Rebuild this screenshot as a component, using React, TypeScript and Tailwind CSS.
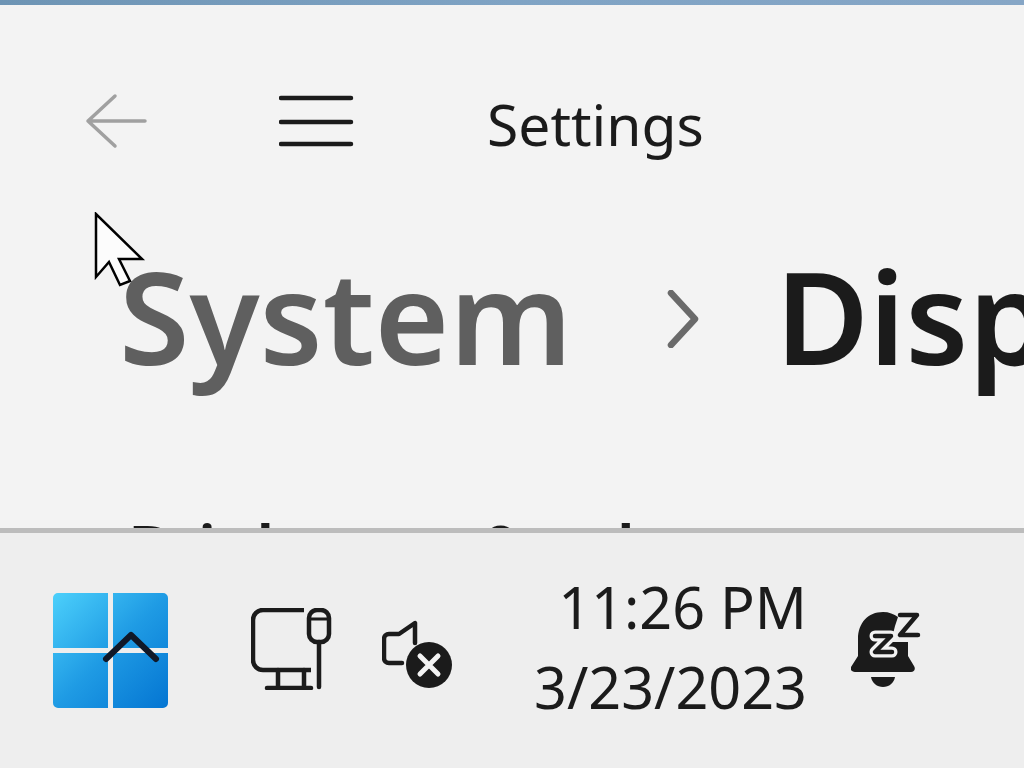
export default function App() {
  return (
    <div className="relative flex h-[768px] w-[1024px] flex-col overflow-hidden bg-[#f3f3f3] font-['Noto_Sans',sans-serif]">
      {/* window edge */}
      <div className="h-[5px] shrink-0 bg-gradient-to-r from-[#6d94b4] via-[#7fa3c4] to-[#86a6c6]" />

      {/* Titlebar */}
      <div className="flex h-[230px] shrink-0 flex-col overflow-hidden">
        <div className="flex h-[190px] items-start pl-[85px] pt-[88px]">
          <svg width="62" height="56" viewBox="0 0 62 56" fill="none" className="shrink-0">
            <path d="M30 3L3 28L30 53M3 28H60" stroke="#a0a0a0" strokeWidth="3.5" strokeLinecap="round" strokeLinejoin="round" />
          </svg>
          <svg width="76" height="54" viewBox="0 0 76 54" fill="none" className="ml-[132px] mt-[1px] shrink-0">
            <path d="M2 4H72M2 28H72M2 50H72" stroke="#1b1b1b" strokeWidth="4.5" strokeLinecap="round" />
          </svg>
          <span className="ml-[132px] mt-[-5px] text-[57px] leading-[72px] text-[#1b1b1b]">Settings</span>
        </div>
      </div>

      {/* Breadcrumb */}
      <div className="mt-[-3px] flex h-[168px] shrink-0 items-center whitespace-nowrap pl-[119px]">
        <span className="text-[128px] font-semibold leading-[168px] text-[#5f5f5f]">System</span>
        <svg width="34" height="58" viewBox="0 0 34 58" fill="none" className="ml-[93px] mt-[5px] shrink-0">
          <path d="M6 3L30 29L6 55" stroke="#6a6a6a" strokeWidth="6.5" strokeLinecap="round" strokeLinejoin="round" />
        </svg>
        <span className="ml-[76px] text-[128px] font-semibold leading-[168px] text-[#1b1b1b]">Display</span>
      </div>

      {/* Section heading, clipped by the taskbar */}
      <div className="h-[128px] shrink-0 overflow-hidden pl-[128px] pt-[127px]">
        <div className="whitespace-nowrap text-[64px] font-semibold leading-[40px] text-[#1b1b1b]">Brightness &amp; color</div>
      </div>

      {/* Taskbar */}
      <div className="flex min-h-0 flex-1 items-start border-t-[5px] border-[#bcbcbc] bg-[#eeeeee] pl-[53px] pt-[60px]">
        <svg width="115" height="115" viewBox="0 0 115 115" className="shrink-0">
          <defs>
            <linearGradient id="win" x1="0" y1="0" x2="1" y2="1">
              <stop offset="0" stopColor="#4cd0fb" />
              <stop offset="0.5" stopColor="#1f9be4" />
              <stop offset="1" stopColor="#0475d2" />
            </linearGradient>
          </defs>
          <path fill="url(#win)" d="M5 0H55V55H0V5A5 5 0 0 1 5 0ZM60 0H110A5 5 0 0 1 115 5V55H60ZM0 60H55V115H5A5 5 0 0 1 0 110ZM60 60H115V110A5 5 0 0 1 110 115H60Z" />
          <path d="M53 66L78 42L103 66" fill="none" stroke="#101828" strokeWidth="6" strokeLinecap="round" strokeLinejoin="round" />
        </svg>

        {/* network */}
        <svg width="82" height="82" viewBox="0 0 82 82" fill="none" className="ml-[83px] mt-[15px] shrink-0">
          <path d="M53 2H12A10 10 0 0 0 2 12V52A10 10 0 0 0 12 62H60" stroke="#1b1b1b" strokeWidth="4.5" />
          <path d="M27 62V78M53 62V78M16 80H60" stroke="#1b1b1b" strokeWidth="4.5" strokeLinecap="round" />
          <rect x="58" y="2" width="20" height="32" rx="8" stroke="#1b1b1b" strokeWidth="4.5" />
          <path d="M58 11H78" stroke="#1b1b1b" strokeWidth="3" />
          <path d="M68 34V79" stroke="#1b1b1b" strokeWidth="4.5" strokeLinecap="round" />
        </svg>

        {/* muted speaker */}
        <svg width="72" height="70" viewBox="0 0 72 70" fill="none" className="ml-[49px] mt-[27px] shrink-0">
          <path d="M20 43H7A5 5 0 0 1 2 38V19A5 5 0 0 1 7 14H17L33 3V23" stroke="#1b1b1b" strokeWidth="4.5" strokeLinejoin="round" strokeLinecap="round" />
          <circle cx="47" cy="45" r="23" fill="#1b1b1b" />
          <path d="M38 36L56 54M56 36L38 54" stroke="#f4f4f4" strokeWidth="5" strokeLinecap="round" />
        </svg>

        {/* clock */}
        <div className="ml-[80px] mt-[-26px] shrink-0 text-right text-[57.5px] leading-[80px] text-[#1b1b1b]">
          <div>11:26 PM</div>
          <div>3/23/2023</div>
        </div>

        {/* focus assist bell */}
        <svg width="70" height="78" viewBox="0 0 70 78" className="ml-[44px] mt-[19px] shrink-0">
          <path fill="#1b1b1b" d="M32 0C38 0 43 2 47 5L44 14L40 30H57V44L63 54C65 57 63 60 60 60H4C1 60 -1 58 0 55L7 44V27C7 11 17 0 32 0Z" />
          <path fill="#1b1b1b" d="M20 65H44C43 71 38 75 32 75C26 75 21 71 20 65Z" />
          <path d="M24 24H40L24 40H41" fill="none" stroke="#f2f2f2" strokeWidth="11" strokeLinecap="round" strokeLinejoin="round" />
          <path d="M24 24H40L24 40H41" fill="none" stroke="#1b1b1b" strokeWidth="4.5" strokeLinecap="round" strokeLinejoin="round" />
          <path d="M49 3H66L49 23H67" fill="none" stroke="#1b1b1b" strokeWidth="4.5" strokeLinecap="round" strokeLinejoin="round" />
        </svg>
      </div>

      {/* Mouse pointer */}
      <svg width="52" height="76" viewBox="0 0 52 76" className="absolute left-[94px] top-[212px]">
        <path d="M2 2V65L15 50L26 73L36 69L25 47H48Z" fill="#fcfcfc" stroke="#000000" strokeWidth="2.5" />
      </svg>
    </div>
  );
}
